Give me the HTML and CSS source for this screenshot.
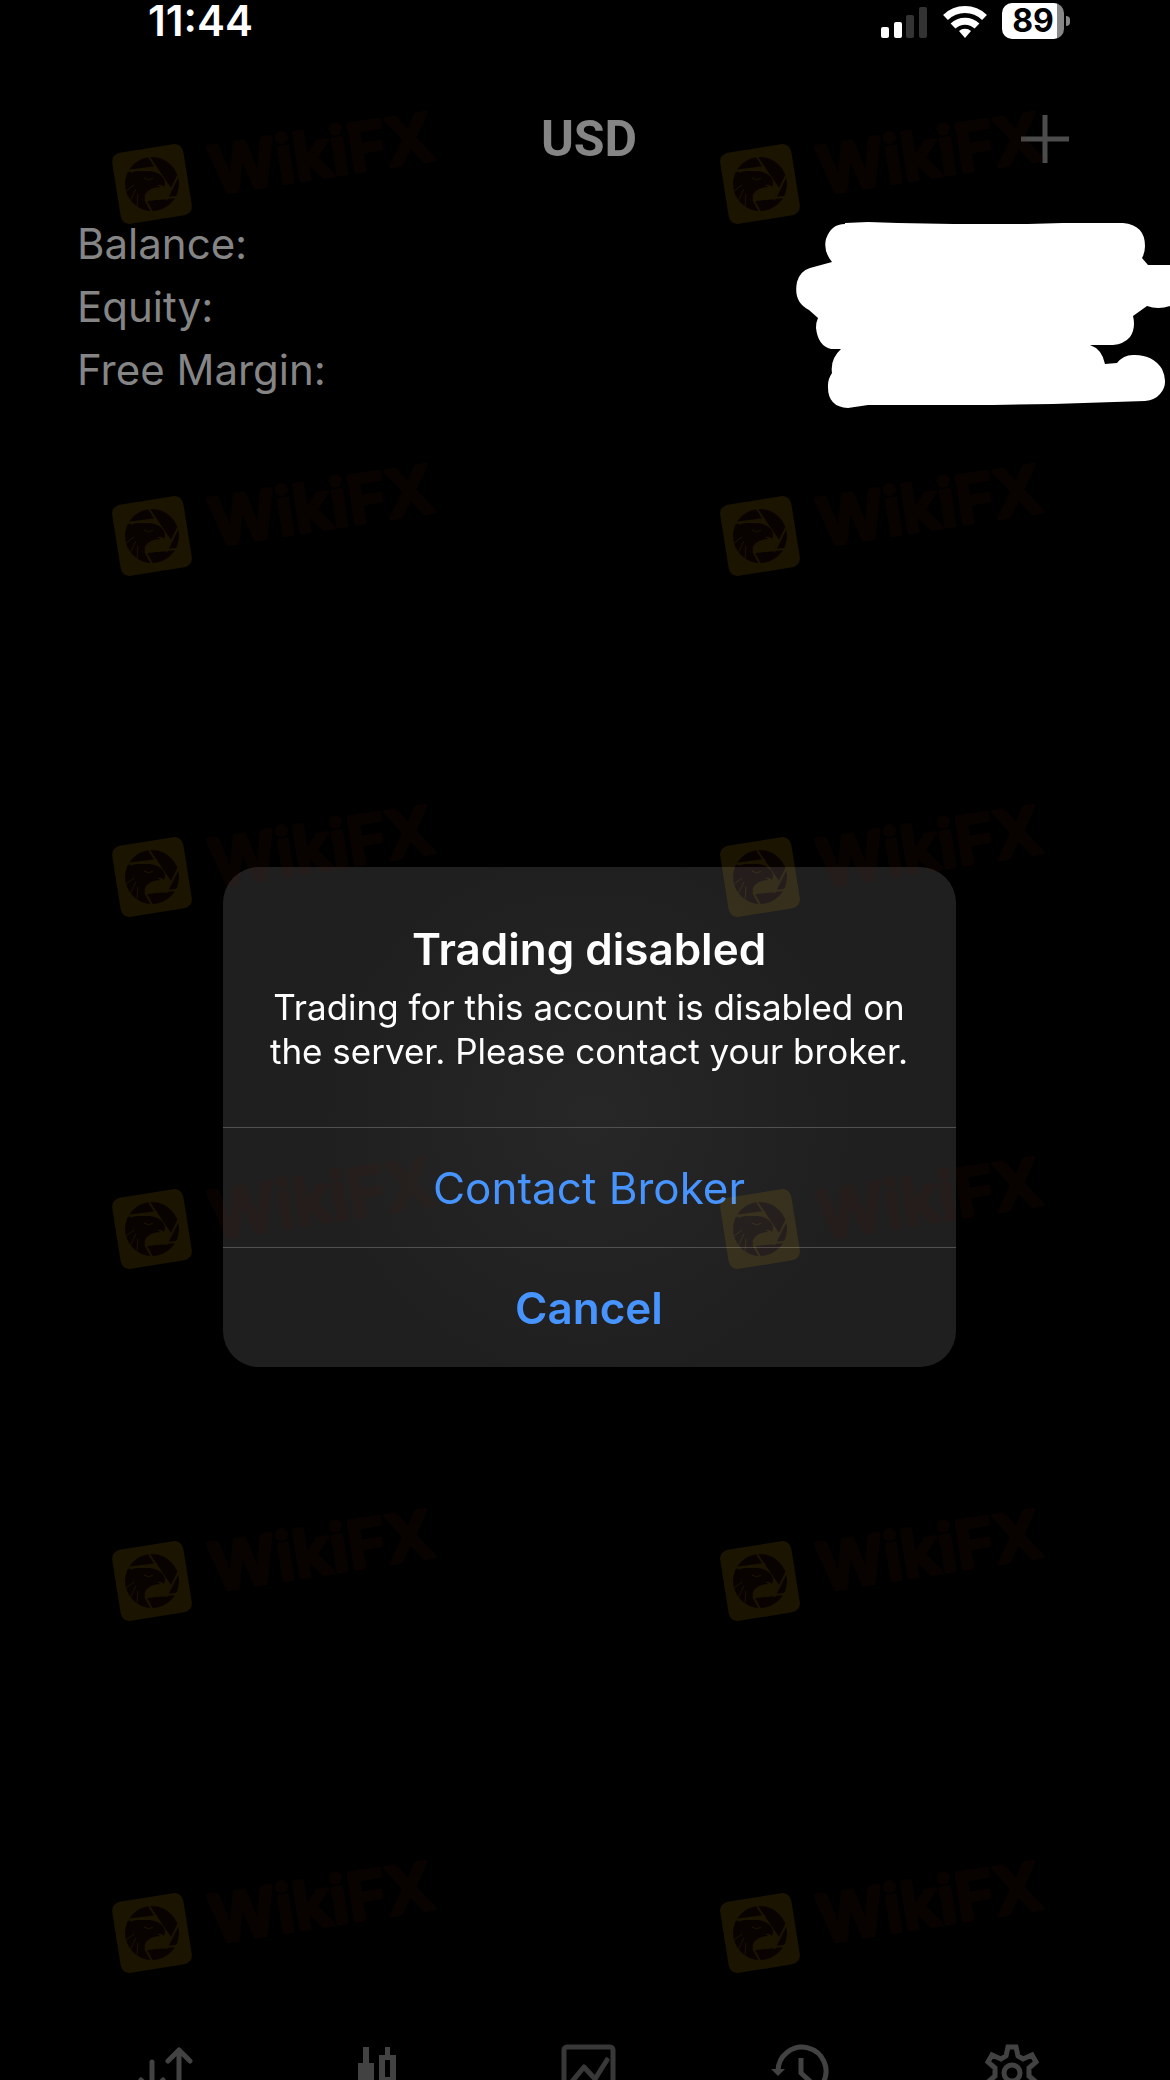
FILE: index.html
```html
<!DOCTYPE html>
<html lang="en">
<head>
    <meta charset="UTF-8">
    <meta name="viewport" content="width=device-width, initial-scale=1.0">
    <title>Trade</title>
    <link rel="stylesheet" href="styles.css">
</head>
<body>
    <div class="screen">
        <div class="status-bar">
            <span class="time">11:44</span>
            <div class="status-icons">
                <svg class="signal" width="48" height="38" viewBox="0 0 48 38">
                    <rect x="1" y="25" width="8" height="11" rx="2" fill="#fff"/>
                    <rect x="14" y="20" width="8" height="16" rx="2" fill="#fff"/>
                    <rect x="26" y="13" width="8" height="23" rx="2" fill="#333"/>
                    <rect x="39" y="5" width="8" height="31" rx="2" fill="#333"/>
                </svg>
                <svg class="wifi" width="44" height="38" viewBox="0 0 44 38">
                    <g fill="none" stroke="#fff" stroke-width="7">
                        <path d="M2.500 15.500a28 28 0 0 1 39 0"/>
                        <path d="M10 24a17.500 17.500 0 0 1 24 0"/>
                    </g>
                    <path d="M22 36l-6-7a9 9 0 0 1 12 0z" fill="#fff"/>
                </svg>
                <div class="battery">89</div>
            </div>
        </div>

        <header class="header">
            <h1>USD</h1>
            <button class="add" aria-label="New order">
                <svg width="50" height="50" viewBox="0 0 50 50"><path d="M25 1v48M1 25h48" stroke="#4c4c4c" stroke-width="5"/></svg>
            </button>
        </header>

        <main class="account">
            <dl>
                <dt>Balance:</dt>
                <dt>Equity:</dt>
                <dt>Free Margin:</dt>
            </dl>
            <svg class="scribble" width="377" height="190" viewBox="0 0 377 190">
                <path fill="#fff" d="M52 3L75 2 105 3 160 4H235L270 3H330Q352 5 352 26Q352 33 349 38L355 45H377V86Q365 90 354 86L340 96Q343 108 337 117Q331 124 320 125L297 125Q309 129 312 144L324 143Q331 134 342 135Q360 135 369 149Q376 164 367 174Q362 180 352 181L260 184 200 185H75L55 188Q34 187 35 165Q35 159 39 153Q37 139 48 129H38Q25 126 23 108Q23 102 25 98L16 90Q0 82 4 62Q7 51 17 48L39 42Q30 31 33 19Q38 4 52 4Z"/>
            </svg>
        </main>

        <nav class="tab-bar">
            <a href="#quotes" aria-label="Quotes">
                <svg viewBox="0 0 64 64"><g fill="none" stroke="#424242" stroke-width="5" stroke-linecap="round" stroke-linejoin="round"><path d="M45 55V8M34 19L45 8l11 11M18 20v35M7 38l11 11 11-11"/></g></svg>
            </a>
            <a href="#charts" aria-label="Charts">
                <svg viewBox="0 0 64 64"><path fill="#424242" d="M18 5h6v16h5v30h-5v10h-6V51h-5V21h5z"/><path fill="#424242" fill-rule="evenodd" d="M40 5h5v8h6v30h-6v10h-5V43h-6V13h6zM40 18v17h5V18z"/></svg>
            </a>
            <a href="#trade" aria-label="Trade">
                <svg viewBox="0 0 64 64"><g fill="none" stroke="#383838" stroke-width="5" stroke-linecap="round" stroke-linejoin="round"><rect x="7" y="5" width="49" height="49" rx="3"/><path d="M13 42l14-17 11 12 12-19"/></g></svg>
            </a>
            <a href="#history" aria-label="History">
                <svg viewBox="0 0 64 64"><path fill="none" stroke="#424242" stroke-width="5" d="M9 29a24 24 0 1 1 8 18M32 16v15l13 12"/><path fill="#424242" d="M2 27h14l-7 7z"/></svg>
            </a>
            <a href="#settings" aria-label="Settings">
                <svg viewBox="0 0 64 64"><g fill="none" stroke="#424242" stroke-width="5"><circle cx="32" cy="31" r="8"/><path d="M28 5h8l2 9 5 3 9-4 4 7-7 6v8l7 6-4 7-9-3-5 3-2 9h-8l-2-9-5-3-9 3-4-7 7-6v-8l-7-6 4-7 9 4 5-3z"/></g></svg>
            </a>
        </nav>
    </div>

    <div class="overlay">
        <div class="alert" role="alertdialog" aria-labelledby="alert-title" aria-describedby="alert-text">
            <div class="alert-body">
                <h2 id="alert-title">Trading disabled</h2>
                <p id="alert-text">Trading for this account is disabled on the server. Please contact your broker.</p>
            </div>
            <button class="alert-btn">Contact Broker</button>
            <button class="alert-btn cancel">Cancel</button>
        </div>
    </div>

    <svg class="watermarks" aria-hidden="true">
        <defs>
            <g id="mark" class="mark">
                <rect class="mark-tile" transform="rotate(-9)" x="-36" y="-36" width="72" height="72" rx="9"/>
                <circle class="mark-dark" r="27"/>
                <!-- shutter opening and blade gaps -->
                <path class="mark-tile" d="M-23 -14L4 -17 19 4 14 15 -6 17 -12 0Z"/>
                <path class="mark-line" d="M-25 -13L5 -17M-3 -27L19 6M27 -10L14 16M24 13L-6 16M-7 15L0 28"/>
                <!-- eagle -->
                <path class="mark-dark" d="M-26 -5Q-22 -13 -14 -13L-2 -13Q8 -12 12 -5Q14 -1 12 3Q10 0 5 1L9 3Q3 3 -1 5Q-7 8 -8 14Q-8 20 -2 27Q-19 24 -25 8Z"/>
                <path class="mark-feather" d="M-26 7l8-6M-22 17l6-12M-15 23l1-13M-8 -6l5 2 4-2"/>
                <text class="mark-text" transform="rotate(-9)" x="59" y="20">WikiFX</text>
            </g>
        </defs>
        <use href="#mark" x="152" y="184"/>
        <use href="#mark" x="760" y="184"/>
        <use href="#mark" x="152" y="536"/>
        <use href="#mark" x="760" y="536"/>
        <use href="#mark" x="152" y="877"/>
        <use href="#mark" x="760" y="877"/>
        <use href="#mark" x="152" y="1229"/>
        <use href="#mark" x="760" y="1229"/>
        <use href="#mark" x="152" y="1581"/>
        <use href="#mark" x="760" y="1581"/>
        <use href="#mark" x="152" y="1933"/>
        <use href="#mark" x="760" y="1933"/>
    </svg>
</body>
</html>
```
FILE: styles.css
```css
* {
    box-sizing: border-box;
}
body {
    margin: 0;
    background: #000;
    color: #858585;
    font-family: Inter, Roboto, sans-serif;
    overflow: hidden;
}
h1, h2, p, dl {
    margin: 0;
}
button {
    border: 0;
    padding: 0;
    background: none;
    font-family: inherit;
    cursor: pointer;
}
.screen {
    display: flex;
    flex-direction: column;
    height: 100vh;
}

/* status bar */
.status-bar {
    display: flex;
    justify-content: space-between;
    align-items: center;
    height: 42px;
    padding: 0 98px 0 148px;
    color: #fff;
}
.time {
    font-size: 42px;
    font-weight: 600;
    line-height: 42px;
}
.status-icons {
    display: flex;
    align-items: center;
    gap: 15px;
}
.battery {
    position: relative;
    width: 62px;
    height: 36px;
    margin-right: 8px;
    border-radius: 10px;
    background: linear-gradient(90deg, #fff 89%, #888 89%);
    color: #000;
    font-size: 32px;
    font-weight: 700;
    line-height: 36px;
    text-align: center;
}
.battery::after {
    content: "";
    position: absolute;
    top: 13px;
    right: -6px;
    width: 4px;
    height: 10px;
    border-radius: 0 4px 4px 0;
    background: #888;
}

/* header */
.header {
    display: grid;
    grid-template-columns: 1fr auto 1fr;
    align-items: center;
    height: 170px;
    padding: 24px 100px 0 108px;
}
.header h1 {
    grid-column: 2;
    font-family: Roboto, sans-serif;
    font-size: 50px;
    font-weight: 700;
}
.add {
    justify-self: end;
    height: 50px;
}

/* account */
.account {
    display: flex;
    justify-content: space-between;
    align-items: flex-start;
    flex: 1;
    padding-left: 77px;
}
.account dt {
    font-size: 42px;
    line-height: 63px;
}
.scribble {
    margin-top: 8px;
}

/* tab bar */
.tab-bar {
    display: flex;
    justify-content: space-around;
    height: 38px;
    padding: 0 52px 0 60px;
}
.tab-bar a {
    width: 64px;
    height: 64px;
}
.tab-bar svg {
    display: block;
    width: 64px;
    height: 64px;
}

/* alert */
.overlay {
    position: fixed;
    inset: 0;
    display: flex;
    align-items: center;
    justify-content: center;
    padding: 154px 0 0 8px;
}
.alert {
    width: 733px;
    border-radius: 36px;
    overflow: hidden;
    background: radial-gradient(circle at 50% 50%, #272728 0, #1f1f1f 60%);
    color: #fff;
    text-align: center;
}
.alert-body {
    padding: 52px 40px 54px;
}
.alert h2 {
    font-size: 44px;
    font-weight: 600;
    line-height: 60px;
}
.alert p {
    margin-top: 6px;
    font-size: 35px;
    line-height: 44px;
}
.alert-btn {
    display: block;
    width: 100%;
    height: 120px;
    border-top: 1px solid #505050;
    color: #4794ff;
    font-size: 44px;
}
.cancel {
    font-weight: 600;
}

/* watermarks */
.watermarks {
    position: fixed;
    inset: 0;
    width: 100%;
    height: 100%;
    pointer-events: none;
}
.mark {
    opacity: 0.1;
}
.mark-tile {
    fill: #ffbe00;
}
.mark-dark {
    fill: #501400;
}
.mark-line, .mark-feather {
    fill: none;
    stroke: #ffbe00;
    stroke-width: 2;
}
.mark-feather {
    stroke-width: 1;
}
.mark-text {
    fill: #501400;
    stroke: #501400;
    stroke-width: 4;
    stroke-linejoin: round;
    font-size: 66px;
    font-weight: 600;
}
```
